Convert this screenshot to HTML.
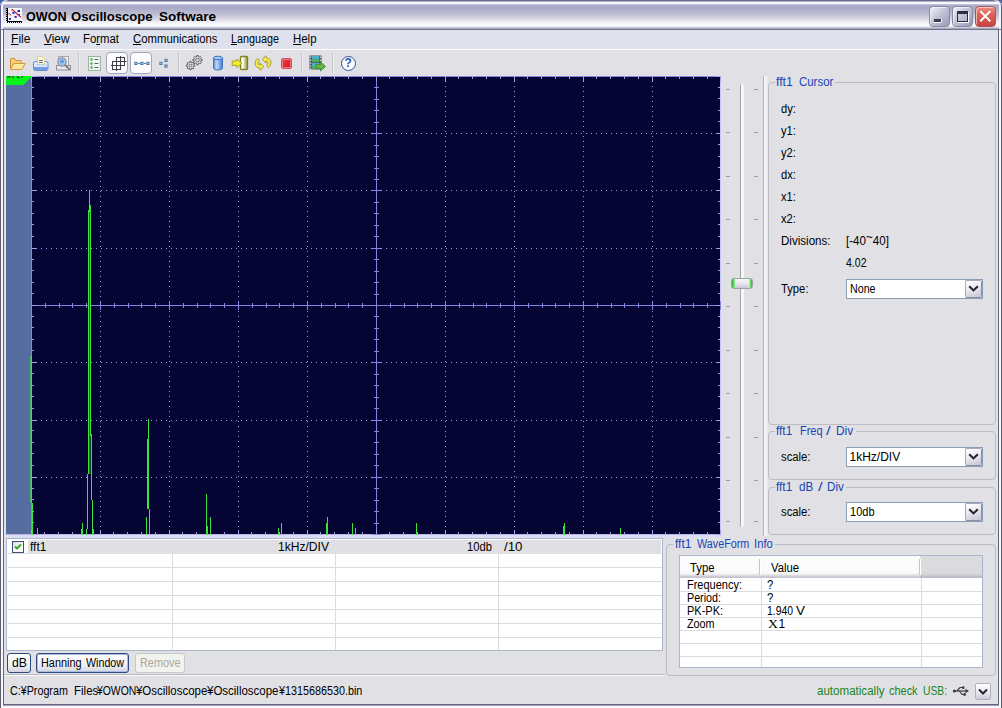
<!DOCTYPE html>
<html><head><meta charset="utf-8">
<style>
*{margin:0;padding:0;box-sizing:border-box}
html,body{width:1002px;height:708px;overflow:hidden;background:#3b62ae}
body{font-family:"Liberation Sans",sans-serif;font-size:12px;color:#000;position:relative}
.a{position:absolute}
.t{position:absolute;white-space:nowrap;line-height:14px;height:14px;font-size:12px;transform-origin:0 0}
u{text-decoration:underline;text-underline-offset:0.5px;text-decoration-thickness:1px}
#win{left:0;top:0;width:1002px;height:708px;background:#e1e0e5;border-radius:6px 6px 0 0;overflow:hidden}
#title{left:0;top:0;width:1002px;height:30px;background:linear-gradient(to bottom,#5a5a7c 0,#77779a 1px,#f0f0f8 2px,#fbfbff 3.5px,#c0c0d8 4.5px,#a8a8c8 6px,#adadc9 9px,#bebed2 14px,#d8d8e4 19px,#f4f4f9 23px,#ffffff 25.5px,#e0e0ea 27px,#a8a8be 28.5px,#74748f 29px,#74748f 30px)}
.gb{position:absolute;border:1px solid #bcbcc2;border-radius:4px}
.gbt{position:absolute;white-space:nowrap;line-height:14px;height:14px;font-size:12px;color:#1746b4;background:#e1e0e5;}
.combo{position:absolute;background:#fff;border:1px solid #8d9cb6;height:20px}
.cbtn{position:absolute;right:0;top:0;width:17px;height:18px;border:1px solid #a4aabc;border-right-color:#8a90a4;border-bottom-color:#8a90a4;border-radius:2px;background:linear-gradient(160deg,#ffffff 10%,#e6e6ee 50%,#c6c8d6 95%)}
.btn{position:absolute;height:20px;border:1px solid #6a7890;border-radius:3px;background:linear-gradient(to bottom,#ffffff,#f0f0f4 60%,#d4d4e0);}
</style></head><body>
<div id="win" class="a">
<div id="title" class="a"></div>
<div class="a" style="left:0;top:0;width:1002px;height:29px;border-radius:6px 6px 0 0;box-shadow:inset 1px 0 0 #5a6496,inset -1px 0 0 #5e5e78,inset 3px 0 0 #f4f4fa,inset -3px 0 0 #f4f4fa"></div>
<div class="a" style="left:0;top:30px;width:4px;height:678px;background:linear-gradient(to right,#5e5e72 0,#5e5e72 1px,#f8f8fb 1px,#f8f8fb 3px,#64647f 3px,#64647f 4px)"></div>
<div class="a" style="left:998px;top:30px;width:4px;height:678px;background:linear-gradient(to right,#64647f 0,#64647f 1px,#f8f8fb 1px,#f8f8fb 3px,#5e5e72 3px,#5e5e72 4px)"></div>
<div class="a" style="left:1px;top:704px;width:1000px;height:4px;background:linear-gradient(to bottom,#64647f 0,#64647f 1px,#a2a2b6 1px,#a2a2b6 2px,#f8f8fb 2px,#f8f8fb 4px)"></div>
<div class="a" style="left:1px;top:704px;width:2px;height:2px;background:#f8f8fb"></div><div class="a" style="left:999px;top:704px;width:2px;height:2px;background:#f8f8fb"></div>
<div class="a" style="left:4px;top:30px;width:994px;height:19px;background:#dfe2ec"></div>
<div class="a" style="left:4px;top:49px;width:994px;height:1px;background:#fbfbfd"></div>
<div class="a" style="left:4px;top:50px;width:994px;height:26px;background:#e1e0e5"></div>
<!-- TITLE -->
<div class="t" style="left:25.5px;top:10px;font-size:12.5px;transform:scaleX(1.006);font-weight:bold;">OWON</div>
<div class="t" style="left:70.5px;top:10px;font-size:12.5px;transform:scaleX(1.048);font-weight:bold;">Oscilloscope</div>
<div class="t" style="left:158.5px;top:10px;font-size:12.5px;transform:scaleX(1.080);font-weight:bold;">Software</div>
<svg class="a" style="left:6px;top:8px" width="16" height="15" viewBox="0 0 16 15"><rect x="2" y="0" width="14" height="13" fill="#f6f6fa"/><rect x="1" y="0" width="1" height="15" fill="#000"/><rect x="1" y="13" width="15" height="1" fill="#000"/><rect x="0" y="0" width="1" height="1" fill="#000"/><rect x="0" y="2" width="1" height="1" fill="#000"/><rect x="0" y="4" width="1" height="1" fill="#000"/><rect x="0" y="6" width="1" height="1" fill="#000"/><rect x="0" y="8" width="1" height="1" fill="#000"/><rect x="0" y="10" width="1" height="1" fill="#000"/><rect x="0" y="12" width="1" height="1" fill="#000"/><rect x="3" y="14" width="1" height="1" fill="#000"/><rect x="5" y="14" width="1" height="1" fill="#000"/><rect x="7" y="14" width="1" height="1" fill="#000"/><rect x="9" y="14" width="1" height="1" fill="#000"/><rect x="11" y="14" width="1" height="1" fill="#000"/><rect x="13" y="14" width="1" height="1" fill="#000"/><rect x="15" y="14" width="1" height="1" fill="#000"/><rect x="5.5" y="1" width="1.6" height="1.4" fill="#c8283a"/><rect x="6.65" y="2" width="1.6" height="1.4" fill="#c8283a"/><rect x="7.8" y="3" width="1.6" height="1.4" fill="#c8283a"/><rect x="8.95" y="4" width="1.6" height="1.4" fill="#c8283a"/><rect x="10.1" y="5" width="1.6" height="1.4" fill="#c8283a"/><rect x="11.25" y="6" width="1.6" height="1.4" fill="#c8283a"/><rect x="12.4" y="7" width="1.6" height="1.4" fill="#c8283a"/><rect x="13.55" y="8" width="1.6" height="1.4" fill="#c8283a"/><rect x="2.5" y="5" width="1.5" height="1.3" fill="#d05060"/><rect x="3.8" y="6.2" width="1.5" height="1.3" fill="#d05060"/><rect x="11.5" y="2" width="2.5" height="2" fill="#1a22c8"/><rect x="6.5" y="4" width="2" height="1.8" fill="#1a22c8"/><rect x="8.5" y="8" width="2.2" height="1.8" fill="#1a22c8"/><rect x="3" y="10" width="2" height="1.8" fill="#1a22c8"/><rect x="12.5" y="6" width="1.5" height="1.2" fill="#1a22c8"/></svg>
<div class="a" style="left:929px;top:6px;width:21px;height:21px;border-radius:4px;border:1px solid #8888a4;background:linear-gradient(135deg,#f4f4fa 0,#c4c4d8 45%,#9a9ab8 100%);box-shadow:inset 1px 1px 0 rgba(255,255,255,.55)"><div class="a" style="left:4px;top:12px;width:7px;height:3px;background:#3c3c58;box-shadow:0 1px 0 #fff, 1px 0 0 #fff"></div></div>
<div class="a" style="left:952px;top:6px;width:21px;height:21px;border-radius:4px;border:1px solid #8888a4;background:linear-gradient(135deg,#f4f4fa 0,#c4c4d8 45%,#9a9ab8 100%);box-shadow:inset 1px 1px 0 rgba(255,255,255,.55)"><div class="a" style="left:4px;top:4px;width:11px;height:11px;border:1px solid #2c2c48;border-top-width:3px;box-shadow:1px 1px 0 #fff"></div></div>
<div class="a" style="left:975px;top:6px;width:21px;height:21px;border-radius:4px;border:1px solid #b05058;background:linear-gradient(to bottom,#ea8e84 0,#dc6258 40%,#c64440 100%);box-shadow:inset 1px 1px 0 rgba(255,255,255,.55)"><svg class="a" style="left:0;top:0" width="19" height="19"><path d="M5 4.8L13.6 13.6M13.6 4.8L5 13.6" stroke="#fff" stroke-width="2" stroke-linecap="square"/></svg></div>
<!-- MENU -->
<div class="t" style="left:10.5px;top:32px;transform:scaleX(1.008);"><u>F</u>ile</div>
<div class="t" style="left:43.5px;top:32px;transform:scaleX(0.989);"><u>V</u>iew</div>
<div class="t" style="left:83px;top:32px;transform:scaleX(0.947);">Fo<u>r</u>mat</div>
<div class="t" style="left:132.5px;top:32px;transform:scaleX(0.946);"><u>C</u>ommunications</div>
<div class="t" style="left:231px;top:32px;transform:scaleX(0.899);"><u>L</u>anguage</div>
<div class="t" style="left:293px;top:32px;transform:scaleX(0.952);"><u>H</u>elp</div>
<!-- TOOLBAR -->
<div class="a" style="left:78px;top:53px;width:1px;height:20px;background:#c6c6cf"></div>
<div class="a" style="left:79px;top:53px;width:1px;height:20px;background:#ececf2"></div>
<div class="a" style="left:178px;top:53px;width:1px;height:20px;background:#c6c6cf"></div>
<div class="a" style="left:179px;top:53px;width:1px;height:20px;background:#ececf2"></div>
<div class="a" style="left:301px;top:53px;width:1px;height:20px;background:#c6c6cf"></div>
<div class="a" style="left:302px;top:53px;width:1px;height:20px;background:#ececf2"></div>
<div class="a" style="left:332px;top:53px;width:1px;height:20px;background:#c6c6cf"></div>
<div class="a" style="left:333px;top:53px;width:1px;height:20px;background:#ececf2"></div>
<div class="a" style="left:106px;top:52px;width:22px;height:22px;border:1px solid #9fa8ba;border-radius:4px;background:#fcfcfe"></div>
<div class="a" style="left:130px;top:52px;width:22px;height:22px;border:1px solid #9fa8ba;border-radius:4px;background:#fcfcfe"></div>
<svg class="a" style="left:9px;top:56px" width="18" height="16" viewBox="0 0 18 16"><path d="M1.5 12.5V3.5Q1.5 2.5 2.5 2.5H5.5L7 4.5H11.5Q12.5 4.5 12.5 5.5V7" fill="#f6cf7c" stroke="#cf8e32" stroke-width="1"/><path d="M1.6 13.5L4.8 7.5H16.3L12.8 13.5Z" fill="#fde7a4" stroke="#d39a3a" stroke-width="1" stroke-linejoin="round"/></svg>
<svg class="a" style="left:32px;top:55px" width="18" height="17" viewBox="0 0 18 17"><rect x="1.5" y="6.5" width="14.5" height="9" rx="2" fill="#dfeafa" stroke="#5a8ad2"/><path d="M1.8 12H15.7V14Q15.7 15.2 14.5 15.2H3Q1.8 15.2 1.8 14Z" fill="#6f9ce0"/><path d="M5.5 9.5V1.5H10L12.5 3.5V9.5Z" fill="#fcf6d4" stroke="#d9d2a0" stroke-width="1"/><path d="M7 5.5H11M7 7.5H11" stroke="#6c7890" stroke-width="1"/><path d="M4 9.8H14" stroke="#b8cdf0" stroke-width="1"/></svg>
<svg class="a" style="left:55px;top:55px" width="18" height="17" viewBox="0 0 18 17"><rect x="3.5" y="1.5" width="10" height="13" fill="#f0f0f2" stroke="#a8a8ac"/><rect x="1.5" y="10.5" width="14" height="4.5" fill="#e8e8ea" stroke="#909094"/><circle cx="7" cy="7" r="4.2" fill="#9ec4ee" stroke="#8a98a8" stroke-width="1.3"/><circle cx="7" cy="6.5" r="1.8" fill="#5e94d8"/><path d="M10 10L14 14" stroke="#808088" stroke-width="2" stroke-linecap="round"/></svg>
<svg class="a" style="left:88px;top:56px" width="13" height="15" viewBox="0 0 13 15"><rect x="0.5" y="0.5" width="12" height="14" fill="#f2f6f2" stroke="#9db4a4"/><circle cx="3.5" cy="3.5" r="1.2" fill="#4aa84a" stroke="#9ad09a" stroke-width="0.5"/><path d="M6.5 3.5H10.5" stroke="#50545c" stroke-width="0.9"/><circle cx="3.5" cy="7.5" r="1.2" fill="#4aa84a" stroke="#9ad09a" stroke-width="0.5"/><path d="M6.5 7.5H10.5" stroke="#50545c" stroke-width="0.9"/><circle cx="3.5" cy="11.5" r="1.2" fill="#4aa84a" stroke="#9ad09a" stroke-width="0.5"/><path d="M6.5 11.5H10.5" stroke="#50545c" stroke-width="0.9"/></svg>
<svg class="a" style="left:110px;top:55px" width="18" height="17" viewBox="0 0 18 17"><g fill="none" stroke="#404044" stroke-width="1"><path d="M2.5 6V15M6.5 2V16M10.5 1V15M14.5 2V11"/><path d="M6 2.5H15M2 6.5H16.5M1 10.5H15M2 14.5H11"/></g></svg>
<svg class="a" style="left:134px;top:61px" width="16" height="5" viewBox="0 0 16 5"><rect x="0.3" y="0.8" width="3.2" height="3.2" fill="#4a7aaa"/><rect x="1.3" y="1.8" width="1.2" height="1.2" fill="#b8d4ee"/><rect x="6.3" y="0.8" width="3.2" height="3.2" fill="#4a7aaa"/><rect x="7.3" y="1.8" width="1.2" height="1.2" fill="#b8d4ee"/><rect x="12.3" y="0.8" width="3.2" height="3.2" fill="#4a7aaa"/><rect x="13.3" y="1.8" width="1.2" height="1.2" fill="#b8d4ee"/><path d="M4 2.4H6M10 2.4H12" stroke="#4a7aaa" stroke-width="1"/></svg>
<svg class="a" style="left:159px;top:58px" width="9" height="10" viewBox="0 0 9 10"><rect x="0.3" y="3.8" width="3.2" height="3.2" fill="#4a7aaa"/><rect x="1.3" y="4.8" width="1.2" height="1.2" fill="#b8d4ee"/><rect x="5.4" y="0.8" width="3.2" height="3.2" fill="#4a7aaa"/><rect x="6.4" y="1.8" width="1.2" height="1.2" fill="#b8d4ee"/><rect x="5.4" y="6.5" width="3.2" height="3.2" fill="#4a7aaa"/><rect x="6.4" y="7.5" width="1.2" height="1.2" fill="#b8d4ee"/></svg>
<svg class="a" style="left:185px;top:55px" width="20" height="17" viewBox="0 0 20 17"><path d="M9.65 9.97 L9.65 11.23 L8.35 11.31 L8.02 12.12 L8.88 13.09 L7.99 13.98 L7.02 13.12 L6.21 13.45 L6.13 14.75 L4.87 14.75 L4.79 13.45 L3.98 13.12 L3.01 13.98 L2.12 13.09 L2.98 12.12 L2.65 11.31 L1.35 11.23 L1.35 9.97 L2.65 9.89 L2.98 9.08 L2.12 8.11 L3.01 7.22 L3.98 8.08 L4.79 7.75 L4.87 6.45 L6.13 6.45 L6.21 7.75 L7.02 8.08 L7.99 7.22 L8.88 8.11 L8.02 9.08 L8.35 9.89 Z" fill="#fafafc" stroke="#46464a" stroke-width="0.85" stroke-linejoin="round"/><circle cx="5.5" cy="10.6" r="1.5" fill="#e8e8ec" stroke="#46464a" stroke-width="0.8"/><path d="M17.15 4.40 L17.15 5.80 L15.69 5.89 L15.32 6.80 L16.28 7.89 L15.29 8.88 L14.20 7.92 L13.29 8.29 L13.20 9.75 L11.80 9.75 L11.71 8.29 L10.80 7.92 L9.71 8.88 L8.72 7.89 L9.68 6.80 L9.31 5.89 L7.85 5.80 L7.85 4.40 L9.31 4.31 L9.68 3.40 L8.72 2.31 L9.71 1.32 L10.80 2.28 L11.71 1.91 L11.80 0.45 L13.20 0.45 L13.29 1.91 L14.20 2.28 L15.29 1.32 L16.28 2.31 L15.32 3.40 L15.69 4.31 Z" fill="#fafafc" stroke="#46464a" stroke-width="0.85" stroke-linejoin="round"/><circle cx="12.5" cy="5.1" r="1.8" fill="#e8e8ec" stroke="#46464a" stroke-width="0.8"/></svg>
<svg class="a" style="left:212px;top:55px" width="12" height="16" viewBox="0 0 12 16"><defs><linearGradient id="cy" x1="0" x2="1" y1="0" y2="0"><stop offset="0" stop-color="#5b8ad6"/><stop offset="0.35" stop-color="#bcd6f6"/><stop offset="1" stop-color="#4a7bcc"/></linearGradient></defs><path d="M1.5 3V13Q1.5 15 6 15Q10.5 15 10.5 13V3Z" fill="url(#cy)" stroke="#3f72c4"/><ellipse cx="6" cy="3" rx="4.5" ry="1.8" fill="#a8c8f4" stroke="#3f72c4"/></svg>
<svg class="a" style="left:231px;top:55px" width="18" height="16" viewBox="0 0 18 16"><defs><linearGradient id="bx" x1="0" x2="1" y1="0" y2="0"><stop offset="0" stop-color="#ffffff"/><stop offset="0.35" stop-color="#fbfbf0"/><stop offset="1" stop-color="#8c9428"/></linearGradient></defs><path d="M9.5 2.5Q9.5 1.5 10.5 1.5H15.5Q16.5 1.5 16.5 2.5V13.5Q16.5 14.5 15.5 14.5H10.5Q9.5 14.5 9.5 13.5Z" fill="url(#bx)" stroke="#7e8420" stroke-width="1.4"/><path d="M1.2 6H5.8V4L10.8 8.2L5.8 12.6V10.4H1.2Z" fill="#f4ee2a" stroke="#9c9c24" stroke-width="0.9" stroke-linejoin="round"/></svg>
<svg class="a" style="left:254px;top:55px" width="18" height="16" viewBox="0 0 18 16"><g fill="#f7ea48" stroke="#a4962e" stroke-width="0.9" stroke-linejoin="round"><path d="M8.2 4.2L12 0.8V2.8Q17 3.4 17 8Q16.8 11 14.2 12.6L12.6 10.4Q14.2 9.2 14 7.6Q13.6 6.2 12 6V8.2Z"/><path d="M9.8 11.8L6 15.2V13.2Q1 12.6 1 8Q1.2 5 3.8 3.4L5.4 5.6Q3.8 6.8 4 8.4Q4.4 9.8 6 10V7.8Z"/></g></svg>
<div class="a" style="left:281px;top:58px;width:11px;height:11px;border:1px solid #d0505a;border-radius:2px;background:linear-gradient(135deg,#ee4a54,#e02832 50%,#d81c28);box-shadow:inset 0 0 0 1px #f07880;"></div>
<svg class="a" style="left:309px;top:55px" width="17" height="17" viewBox="0 0 17 17"><rect x="0.5" y="0.5" width="12" height="14" fill="#58585c"/><rect x="3" y="1" width="7" height="6" fill="#4ab0d0"/><rect x="3" y="4" width="7" height="3" fill="#48b060"/><rect x="3" y="8" width="7" height="6" fill="#4ab0d0"/><rect x="3" y="11" width="7" height="3" fill="#48b060"/><rect x="1" y="1.5" width="1.2" height="1.4" fill="#d8d8dc"/><rect x="10.8" y="1.5" width="1.2" height="1.4" fill="#d8d8dc"/><rect x="1" y="4.5" width="1.2" height="1.4" fill="#d8d8dc"/><rect x="10.8" y="4.5" width="1.2" height="1.4" fill="#d8d8dc"/><rect x="1" y="7.5" width="1.2" height="1.4" fill="#d8d8dc"/><rect x="10.8" y="7.5" width="1.2" height="1.4" fill="#d8d8dc"/><rect x="1" y="10.5" width="1.2" height="1.4" fill="#d8d8dc"/><rect x="10.8" y="10.5" width="1.2" height="1.4" fill="#d8d8dc"/><rect x="1" y="13" width="1.2" height="1.4" fill="#d8d8dc"/><rect x="10.8" y="13" width="1.2" height="1.4" fill="#d8d8dc"/><path d="M7 9.5H11.5V7L16.5 11.5L11.5 16V13.5H7Z" fill="#62b84a" stroke="#3c8a30" stroke-width="0.9" stroke-linejoin="round"/></svg>
<div class="a" style="left:341px;top:55.5px;width:15px;height:15px;border:1.3px solid #2a529e;border-radius:50%;background:#fdfdff"></div>
<div class="t" style="left:344.6px;top:56px;font-size:12px;font-weight:bold;color:#2a56b0">?</div>
<!-- SCOPE -->
<svg class="a" style="left:6px;top:76px" width="716" height="463" shape-rendering="crispEdges"><rect x="0" y="459" width="715" height="3" fill="#dcdcf3"/><rect x="0" y="0" width="25" height="459" fill="#566e9f"/><rect x="25" y="0" width="690" height="459" fill="#050432"/><path d="M0 0H25V1.5L18.5 8.5H0Z" fill="#06f41c"/><path d="M2.5 0L1.5 2M4.5 0L3.5 2M7.5 0L6.5 2M11.5 0V2M11.5 1.5H13.5M16.5 0L15.5 2" stroke="#0a3a0a" stroke-width="1" fill="none" shape-rendering="auto"/><path d="M94.5 0V458M163.5 0V458M232.5 0V458M301.5 0V458M439.5 0V458M508.5 0V458M577.5 0V458M646.5 0V458M25 57.5H714M25 114.5H714M25 172.5H714M25 286.5H714M25 344.5H714M25 401.5H714" stroke="#9a9ae6" stroke-width="1" stroke-dasharray="1 4" fill="none"/><rect x="25" y="0" width="690" height="1" fill="#8484e2"/><rect x="25" y="0" width="1" height="459" fill="#8484e2"/><rect x="714" y="0" width="1" height="459" fill="#c6c6fa"/><rect x="0" y="458" width="715" height="1" fill="#b6b6f2"/><rect x="370" y="0" width="1" height="459" fill="#8484e2"/><rect x="25" y="229" width="690" height="1" fill="#8484e2"/><rect x="25" y="0" width="1" height="5" fill="#a2a2ea"/><rect x="25" y="454" width="1" height="5" fill="#a2a2ea"/><rect x="25" y="225" width="1" height="9" fill="#8484e2"/><rect x="38" y="0" width="1" height="3" fill="#a2a2ea"/><rect x="38" y="456" width="1" height="3" fill="#a2a2ea"/><rect x="39" y="227" width="1" height="5" fill="#8484e2"/><rect x="52" y="0" width="1" height="3" fill="#a2a2ea"/><rect x="52" y="456" width="1" height="3" fill="#a2a2ea"/><rect x="53" y="227" width="1" height="5" fill="#8484e2"/><rect x="66" y="0" width="1" height="3" fill="#a2a2ea"/><rect x="66" y="456" width="1" height="3" fill="#a2a2ea"/><rect x="66" y="227" width="1" height="5" fill="#8484e2"/><rect x="80" y="0" width="1" height="3" fill="#a2a2ea"/><rect x="80" y="456" width="1" height="3" fill="#a2a2ea"/><rect x="80" y="227" width="1" height="5" fill="#8484e2"/><rect x="94" y="0" width="1" height="5" fill="#a2a2ea"/><rect x="94" y="454" width="1" height="5" fill="#a2a2ea"/><rect x="94" y="225" width="1" height="9" fill="#8484e2"/><rect x="107" y="0" width="1" height="3" fill="#a2a2ea"/><rect x="107" y="456" width="1" height="3" fill="#a2a2ea"/><rect x="108" y="227" width="1" height="5" fill="#8484e2"/><rect x="121" y="0" width="1" height="3" fill="#a2a2ea"/><rect x="121" y="456" width="1" height="3" fill="#a2a2ea"/><rect x="122" y="227" width="1" height="5" fill="#8484e2"/><rect x="135" y="0" width="1" height="3" fill="#a2a2ea"/><rect x="135" y="456" width="1" height="3" fill="#a2a2ea"/><rect x="135" y="227" width="1" height="5" fill="#8484e2"/><rect x="149" y="0" width="1" height="3" fill="#a2a2ea"/><rect x="149" y="456" width="1" height="3" fill="#a2a2ea"/><rect x="149" y="227" width="1" height="5" fill="#8484e2"/><rect x="163" y="0" width="1" height="5" fill="#a2a2ea"/><rect x="163" y="454" width="1" height="5" fill="#a2a2ea"/><rect x="163" y="225" width="1" height="9" fill="#8484e2"/><rect x="176" y="0" width="1" height="3" fill="#a2a2ea"/><rect x="176" y="456" width="1" height="3" fill="#a2a2ea"/><rect x="177" y="227" width="1" height="5" fill="#8484e2"/><rect x="190" y="0" width="1" height="3" fill="#a2a2ea"/><rect x="190" y="456" width="1" height="3" fill="#a2a2ea"/><rect x="191" y="227" width="1" height="5" fill="#8484e2"/><rect x="204" y="0" width="1" height="3" fill="#a2a2ea"/><rect x="204" y="456" width="1" height="3" fill="#a2a2ea"/><rect x="204" y="227" width="1" height="5" fill="#8484e2"/><rect x="218" y="0" width="1" height="3" fill="#a2a2ea"/><rect x="218" y="456" width="1" height="3" fill="#a2a2ea"/><rect x="218" y="227" width="1" height="5" fill="#8484e2"/><rect x="232" y="0" width="1" height="5" fill="#a2a2ea"/><rect x="232" y="454" width="1" height="5" fill="#a2a2ea"/><rect x="232" y="225" width="1" height="9" fill="#8484e2"/><rect x="245" y="0" width="1" height="3" fill="#a2a2ea"/><rect x="245" y="456" width="1" height="3" fill="#a2a2ea"/><rect x="246" y="227" width="1" height="5" fill="#8484e2"/><rect x="259" y="0" width="1" height="3" fill="#a2a2ea"/><rect x="259" y="456" width="1" height="3" fill="#a2a2ea"/><rect x="260" y="227" width="1" height="5" fill="#8484e2"/><rect x="273" y="0" width="1" height="3" fill="#a2a2ea"/><rect x="273" y="456" width="1" height="3" fill="#a2a2ea"/><rect x="273" y="227" width="1" height="5" fill="#8484e2"/><rect x="287" y="0" width="1" height="3" fill="#a2a2ea"/><rect x="287" y="456" width="1" height="3" fill="#a2a2ea"/><rect x="287" y="227" width="1" height="5" fill="#8484e2"/><rect x="301" y="0" width="1" height="5" fill="#a2a2ea"/><rect x="301" y="454" width="1" height="5" fill="#a2a2ea"/><rect x="301" y="225" width="1" height="9" fill="#8484e2"/><rect x="314" y="0" width="1" height="3" fill="#a2a2ea"/><rect x="314" y="456" width="1" height="3" fill="#a2a2ea"/><rect x="315" y="227" width="1" height="5" fill="#8484e2"/><rect x="328" y="0" width="1" height="3" fill="#a2a2ea"/><rect x="328" y="456" width="1" height="3" fill="#a2a2ea"/><rect x="329" y="227" width="1" height="5" fill="#8484e2"/><rect x="342" y="0" width="1" height="3" fill="#a2a2ea"/><rect x="342" y="456" width="1" height="3" fill="#a2a2ea"/><rect x="342" y="227" width="1" height="5" fill="#8484e2"/><rect x="356" y="0" width="1" height="3" fill="#a2a2ea"/><rect x="356" y="456" width="1" height="3" fill="#a2a2ea"/><rect x="356" y="227" width="1" height="5" fill="#8484e2"/><rect x="370" y="0" width="1" height="5" fill="#a2a2ea"/><rect x="370" y="454" width="1" height="5" fill="#a2a2ea"/><rect x="370" y="225" width="1" height="9" fill="#8484e2"/><rect x="383" y="0" width="1" height="3" fill="#a2a2ea"/><rect x="383" y="456" width="1" height="3" fill="#a2a2ea"/><rect x="384" y="227" width="1" height="5" fill="#8484e2"/><rect x="397" y="0" width="1" height="3" fill="#a2a2ea"/><rect x="397" y="456" width="1" height="3" fill="#a2a2ea"/><rect x="398" y="227" width="1" height="5" fill="#8484e2"/><rect x="411" y="0" width="1" height="3" fill="#a2a2ea"/><rect x="411" y="456" width="1" height="3" fill="#a2a2ea"/><rect x="411" y="227" width="1" height="5" fill="#8484e2"/><rect x="425" y="0" width="1" height="3" fill="#a2a2ea"/><rect x="425" y="456" width="1" height="3" fill="#a2a2ea"/><rect x="425" y="227" width="1" height="5" fill="#8484e2"/><rect x="439" y="0" width="1" height="5" fill="#a2a2ea"/><rect x="439" y="454" width="1" height="5" fill="#a2a2ea"/><rect x="439" y="225" width="1" height="9" fill="#8484e2"/><rect x="452" y="0" width="1" height="3" fill="#a2a2ea"/><rect x="452" y="456" width="1" height="3" fill="#a2a2ea"/><rect x="453" y="227" width="1" height="5" fill="#8484e2"/><rect x="466" y="0" width="1" height="3" fill="#a2a2ea"/><rect x="466" y="456" width="1" height="3" fill="#a2a2ea"/><rect x="467" y="227" width="1" height="5" fill="#8484e2"/><rect x="480" y="0" width="1" height="3" fill="#a2a2ea"/><rect x="480" y="456" width="1" height="3" fill="#a2a2ea"/><rect x="480" y="227" width="1" height="5" fill="#8484e2"/><rect x="494" y="0" width="1" height="3" fill="#a2a2ea"/><rect x="494" y="456" width="1" height="3" fill="#a2a2ea"/><rect x="494" y="227" width="1" height="5" fill="#8484e2"/><rect x="508" y="0" width="1" height="5" fill="#a2a2ea"/><rect x="508" y="454" width="1" height="5" fill="#a2a2ea"/><rect x="508" y="225" width="1" height="9" fill="#8484e2"/><rect x="521" y="0" width="1" height="3" fill="#a2a2ea"/><rect x="521" y="456" width="1" height="3" fill="#a2a2ea"/><rect x="522" y="227" width="1" height="5" fill="#8484e2"/><rect x="535" y="0" width="1" height="3" fill="#a2a2ea"/><rect x="535" y="456" width="1" height="3" fill="#a2a2ea"/><rect x="536" y="227" width="1" height="5" fill="#8484e2"/><rect x="549" y="0" width="1" height="3" fill="#a2a2ea"/><rect x="549" y="456" width="1" height="3" fill="#a2a2ea"/><rect x="549" y="227" width="1" height="5" fill="#8484e2"/><rect x="563" y="0" width="1" height="3" fill="#a2a2ea"/><rect x="563" y="456" width="1" height="3" fill="#a2a2ea"/><rect x="563" y="227" width="1" height="5" fill="#8484e2"/><rect x="577" y="0" width="1" height="5" fill="#a2a2ea"/><rect x="577" y="454" width="1" height="5" fill="#a2a2ea"/><rect x="577" y="225" width="1" height="9" fill="#8484e2"/><rect x="590" y="0" width="1" height="3" fill="#a2a2ea"/><rect x="590" y="456" width="1" height="3" fill="#a2a2ea"/><rect x="591" y="227" width="1" height="5" fill="#8484e2"/><rect x="604" y="0" width="1" height="3" fill="#a2a2ea"/><rect x="604" y="456" width="1" height="3" fill="#a2a2ea"/><rect x="605" y="227" width="1" height="5" fill="#8484e2"/><rect x="618" y="0" width="1" height="3" fill="#a2a2ea"/><rect x="618" y="456" width="1" height="3" fill="#a2a2ea"/><rect x="618" y="227" width="1" height="5" fill="#8484e2"/><rect x="632" y="0" width="1" height="3" fill="#a2a2ea"/><rect x="632" y="456" width="1" height="3" fill="#a2a2ea"/><rect x="632" y="227" width="1" height="5" fill="#8484e2"/><rect x="646" y="0" width="1" height="5" fill="#a2a2ea"/><rect x="646" y="454" width="1" height="5" fill="#a2a2ea"/><rect x="646" y="225" width="1" height="9" fill="#8484e2"/><rect x="659" y="0" width="1" height="3" fill="#a2a2ea"/><rect x="659" y="456" width="1" height="3" fill="#a2a2ea"/><rect x="660" y="227" width="1" height="5" fill="#8484e2"/><rect x="673" y="0" width="1" height="3" fill="#a2a2ea"/><rect x="673" y="456" width="1" height="3" fill="#a2a2ea"/><rect x="674" y="227" width="1" height="5" fill="#8484e2"/><rect x="687" y="0" width="1" height="3" fill="#a2a2ea"/><rect x="687" y="456" width="1" height="3" fill="#a2a2ea"/><rect x="687" y="227" width="1" height="5" fill="#8484e2"/><rect x="701" y="0" width="1" height="3" fill="#a2a2ea"/><rect x="701" y="456" width="1" height="3" fill="#a2a2ea"/><rect x="701" y="227" width="1" height="5" fill="#8484e2"/><rect x="714" y="0" width="1" height="5" fill="#a2a2ea"/><rect x="714" y="454" width="1" height="5" fill="#a2a2ea"/><rect x="714" y="225" width="1" height="9" fill="#8484e2"/><rect x="26" y="0" width="5" height="1" fill="#a2a2ea"/><rect x="710" y="0" width="4" height="1" fill="#a2a2ea"/><rect x="366" y="0" width="9" height="1" fill="#8484e2"/><rect x="26" y="11" width="2" height="1" fill="#a2a2ea"/><rect x="712" y="11" width="2" height="1" fill="#a2a2ea"/><rect x="368" y="11" width="5" height="1" fill="#8484e2"/><rect x="26" y="22" width="2" height="1" fill="#a2a2ea"/><rect x="712" y="22" width="2" height="1" fill="#a2a2ea"/><rect x="368" y="23" width="5" height="1" fill="#8484e2"/><rect x="26" y="34" width="2" height="1" fill="#a2a2ea"/><rect x="712" y="34" width="2" height="1" fill="#a2a2ea"/><rect x="368" y="34" width="5" height="1" fill="#8484e2"/><rect x="26" y="45" width="2" height="1" fill="#a2a2ea"/><rect x="712" y="45" width="2" height="1" fill="#a2a2ea"/><rect x="368" y="46" width="5" height="1" fill="#8484e2"/><rect x="26" y="57" width="5" height="1" fill="#a2a2ea"/><rect x="710" y="57" width="4" height="1" fill="#a2a2ea"/><rect x="366" y="57" width="9" height="1" fill="#8484e2"/><rect x="26" y="68" width="2" height="1" fill="#a2a2ea"/><rect x="712" y="68" width="2" height="1" fill="#a2a2ea"/><rect x="368" y="69" width="5" height="1" fill="#8484e2"/><rect x="26" y="80" width="2" height="1" fill="#a2a2ea"/><rect x="712" y="80" width="2" height="1" fill="#a2a2ea"/><rect x="368" y="80" width="5" height="1" fill="#8484e2"/><rect x="26" y="91" width="2" height="1" fill="#a2a2ea"/><rect x="712" y="91" width="2" height="1" fill="#a2a2ea"/><rect x="368" y="92" width="5" height="1" fill="#8484e2"/><rect x="26" y="103" width="2" height="1" fill="#a2a2ea"/><rect x="712" y="103" width="2" height="1" fill="#a2a2ea"/><rect x="368" y="103" width="5" height="1" fill="#8484e2"/><rect x="26" y="114" width="5" height="1" fill="#a2a2ea"/><rect x="710" y="114" width="4" height="1" fill="#a2a2ea"/><rect x="366" y="114" width="9" height="1" fill="#8484e2"/><rect x="26" y="125" width="2" height="1" fill="#a2a2ea"/><rect x="712" y="125" width="2" height="1" fill="#a2a2ea"/><rect x="368" y="126" width="5" height="1" fill="#8484e2"/><rect x="26" y="137" width="2" height="1" fill="#a2a2ea"/><rect x="712" y="137" width="2" height="1" fill="#a2a2ea"/><rect x="368" y="137" width="5" height="1" fill="#8484e2"/><rect x="26" y="148" width="2" height="1" fill="#a2a2ea"/><rect x="712" y="148" width="2" height="1" fill="#a2a2ea"/><rect x="368" y="149" width="5" height="1" fill="#8484e2"/><rect x="26" y="160" width="2" height="1" fill="#a2a2ea"/><rect x="712" y="160" width="2" height="1" fill="#a2a2ea"/><rect x="368" y="160" width="5" height="1" fill="#8484e2"/><rect x="26" y="172" width="5" height="1" fill="#a2a2ea"/><rect x="710" y="172" width="4" height="1" fill="#a2a2ea"/><rect x="366" y="172" width="9" height="1" fill="#8484e2"/><rect x="26" y="183" width="2" height="1" fill="#a2a2ea"/><rect x="712" y="183" width="2" height="1" fill="#a2a2ea"/><rect x="368" y="183" width="5" height="1" fill="#8484e2"/><rect x="26" y="194" width="2" height="1" fill="#a2a2ea"/><rect x="712" y="194" width="2" height="1" fill="#a2a2ea"/><rect x="368" y="195" width="5" height="1" fill="#8484e2"/><rect x="26" y="206" width="2" height="1" fill="#a2a2ea"/><rect x="712" y="206" width="2" height="1" fill="#a2a2ea"/><rect x="368" y="206" width="5" height="1" fill="#8484e2"/><rect x="26" y="217" width="2" height="1" fill="#a2a2ea"/><rect x="712" y="217" width="2" height="1" fill="#a2a2ea"/><rect x="368" y="218" width="5" height="1" fill="#8484e2"/><rect x="26" y="229" width="5" height="1" fill="#a2a2ea"/><rect x="710" y="229" width="4" height="1" fill="#a2a2ea"/><rect x="366" y="229" width="9" height="1" fill="#8484e2"/><rect x="26" y="240" width="2" height="1" fill="#a2a2ea"/><rect x="712" y="240" width="2" height="1" fill="#a2a2ea"/><rect x="368" y="240" width="5" height="1" fill="#8484e2"/><rect x="26" y="251" width="2" height="1" fill="#a2a2ea"/><rect x="712" y="251" width="2" height="1" fill="#a2a2ea"/><rect x="368" y="252" width="5" height="1" fill="#8484e2"/><rect x="26" y="263" width="2" height="1" fill="#a2a2ea"/><rect x="712" y="263" width="2" height="1" fill="#a2a2ea"/><rect x="368" y="263" width="5" height="1" fill="#8484e2"/><rect x="26" y="274" width="2" height="1" fill="#a2a2ea"/><rect x="712" y="274" width="2" height="1" fill="#a2a2ea"/><rect x="368" y="275" width="5" height="1" fill="#8484e2"/><rect x="26" y="286" width="5" height="1" fill="#a2a2ea"/><rect x="710" y="286" width="4" height="1" fill="#a2a2ea"/><rect x="366" y="286" width="9" height="1" fill="#8484e2"/><rect x="26" y="297" width="2" height="1" fill="#a2a2ea"/><rect x="712" y="297" width="2" height="1" fill="#a2a2ea"/><rect x="368" y="298" width="5" height="1" fill="#8484e2"/><rect x="26" y="309" width="2" height="1" fill="#a2a2ea"/><rect x="712" y="309" width="2" height="1" fill="#a2a2ea"/><rect x="368" y="309" width="5" height="1" fill="#8484e2"/><rect x="26" y="320" width="2" height="1" fill="#a2a2ea"/><rect x="712" y="320" width="2" height="1" fill="#a2a2ea"/><rect x="368" y="321" width="5" height="1" fill="#8484e2"/><rect x="26" y="332" width="2" height="1" fill="#a2a2ea"/><rect x="712" y="332" width="2" height="1" fill="#a2a2ea"/><rect x="368" y="332" width="5" height="1" fill="#8484e2"/><rect x="26" y="344" width="5" height="1" fill="#a2a2ea"/><rect x="710" y="344" width="4" height="1" fill="#a2a2ea"/><rect x="366" y="344" width="9" height="1" fill="#8484e2"/><rect x="26" y="354" width="2" height="1" fill="#a2a2ea"/><rect x="712" y="354" width="2" height="1" fill="#a2a2ea"/><rect x="368" y="355" width="5" height="1" fill="#8484e2"/><rect x="26" y="366" width="2" height="1" fill="#a2a2ea"/><rect x="712" y="366" width="2" height="1" fill="#a2a2ea"/><rect x="368" y="366" width="5" height="1" fill="#8484e2"/><rect x="26" y="377" width="2" height="1" fill="#a2a2ea"/><rect x="712" y="377" width="2" height="1" fill="#a2a2ea"/><rect x="368" y="378" width="5" height="1" fill="#8484e2"/><rect x="26" y="389" width="2" height="1" fill="#a2a2ea"/><rect x="712" y="389" width="2" height="1" fill="#a2a2ea"/><rect x="368" y="389" width="5" height="1" fill="#8484e2"/><rect x="26" y="401" width="5" height="1" fill="#a2a2ea"/><rect x="710" y="401" width="4" height="1" fill="#a2a2ea"/><rect x="366" y="401" width="9" height="1" fill="#8484e2"/><rect x="26" y="412" width="2" height="1" fill="#a2a2ea"/><rect x="712" y="412" width="2" height="1" fill="#a2a2ea"/><rect x="368" y="412" width="5" height="1" fill="#8484e2"/><rect x="26" y="423" width="2" height="1" fill="#a2a2ea"/><rect x="712" y="423" width="2" height="1" fill="#a2a2ea"/><rect x="368" y="424" width="5" height="1" fill="#8484e2"/><rect x="26" y="435" width="2" height="1" fill="#a2a2ea"/><rect x="712" y="435" width="2" height="1" fill="#a2a2ea"/><rect x="368" y="435" width="5" height="1" fill="#8484e2"/><rect x="26" y="446" width="2" height="1" fill="#a2a2ea"/><rect x="712" y="446" width="2" height="1" fill="#a2a2ea"/><rect x="368" y="447" width="5" height="1" fill="#8484e2"/><rect x="26" y="458" width="5" height="1" fill="#a2a2ea"/><rect x="710" y="458" width="4" height="1" fill="#a2a2ea"/><rect x="366" y="458" width="9" height="1" fill="#8484e2"/><rect x="25" y="280" width="1" height="147" fill="#3fe23c"/><rect x="24" y="280" width="1" height="147" fill="#48b860"/><rect x="26" y="427" width="1" height="32" fill="#3fe23c"/><rect x="31" y="452" width="1" height="7" fill="#3fe23c"/><rect x="76" y="447" width="1" height="12" fill="#3fe23c"/><rect x="75" y="453" width="1" height="6" fill="#3fe23c"/><rect x="83" y="114" width="1" height="22" fill="#3fe23c"/><rect x="82" y="134" width="1" height="264" fill="#3fe23c"/><rect x="84" y="129" width="1" height="231" fill="#3fe23c"/><rect x="83" y="136" width="1" height="262" fill="#17702c"/><rect x="84" y="360" width="1" height="38" fill="#0e4a2a"/><rect x="81" y="398" width="1" height="55" fill="#3fe23c"/><rect x="80" y="453" width="1" height="6" fill="#3fe23c"/><rect x="85" y="358" width="1" height="66" fill="#3fe23c"/><rect x="86" y="424" width="1" height="29" fill="#3fe23c"/><rect x="86" y="453" width="2" height="6" fill="#3fe23c"/><rect x="142" y="343" width="1" height="21" fill="#3fe23c"/><rect x="141" y="363" width="2" height="70" fill="#3fe23c"/><rect x="140" y="441" width="1" height="18" fill="#3fe23c"/><rect x="143" y="433" width="1" height="26" fill="#3fe23c"/><rect x="200" y="418" width="1" height="41" fill="#3fe23c"/><rect x="201" y="450" width="1" height="9" fill="#3fe23c"/><rect x="204" y="441" width="1" height="18" fill="#3fe23c"/><rect x="275" y="447" width="1" height="12" fill="#3fe23c"/><rect x="272" y="452" width="1" height="7" fill="#3fe23c"/><rect x="321" y="441" width="1" height="18" fill="#3fe23c"/><rect x="320" y="447" width="1" height="12" fill="#3fe23c"/><rect x="346" y="447" width="1" height="12" fill="#3fe23c"/><rect x="349" y="452" width="1" height="7" fill="#3fe23c"/><rect x="410" y="447" width="1" height="12" fill="#3fe23c"/><rect x="558" y="447" width="1" height="12" fill="#3fe23c"/><rect x="557" y="450" width="1" height="9" fill="#3fe23c"/><rect x="614" y="452" width="1" height="7" fill="#3fe23c"/></svg>
<!-- SLIDER -->
<div class="a" style="left:726px;top:89px;width:4px;height:1px;background:#9c9ca4"></div>
<div class="a" style="left:754px;top:89px;width:4px;height:1px;background:#9c9ca4"></div>
<div class="a" style="left:726px;top:132px;width:4px;height:1px;background:#9c9ca4"></div>
<div class="a" style="left:754px;top:132px;width:4px;height:1px;background:#9c9ca4"></div>
<div class="a" style="left:726px;top:176px;width:4px;height:1px;background:#9c9ca4"></div>
<div class="a" style="left:754px;top:176px;width:4px;height:1px;background:#9c9ca4"></div>
<div class="a" style="left:726px;top:219px;width:4px;height:1px;background:#9c9ca4"></div>
<div class="a" style="left:754px;top:219px;width:4px;height:1px;background:#9c9ca4"></div>
<div class="a" style="left:726px;top:263px;width:4px;height:1px;background:#9c9ca4"></div>
<div class="a" style="left:754px;top:263px;width:4px;height:1px;background:#9c9ca4"></div>
<div class="a" style="left:726px;top:306px;width:4px;height:1px;background:#9c9ca4"></div>
<div class="a" style="left:754px;top:306px;width:4px;height:1px;background:#9c9ca4"></div>
<div class="a" style="left:726px;top:350px;width:4px;height:1px;background:#9c9ca4"></div>
<div class="a" style="left:754px;top:350px;width:4px;height:1px;background:#9c9ca4"></div>
<div class="a" style="left:726px;top:393px;width:4px;height:1px;background:#9c9ca4"></div>
<div class="a" style="left:754px;top:393px;width:4px;height:1px;background:#9c9ca4"></div>
<div class="a" style="left:726px;top:437px;width:4px;height:1px;background:#9c9ca4"></div>
<div class="a" style="left:754px;top:437px;width:4px;height:1px;background:#9c9ca4"></div>
<div class="a" style="left:726px;top:480px;width:4px;height:1px;background:#9c9ca4"></div>
<div class="a" style="left:754px;top:480px;width:4px;height:1px;background:#9c9ca4"></div>
<div class="a" style="left:726px;top:521px;width:4px;height:1px;background:#9c9ca4"></div>
<div class="a" style="left:754px;top:521px;width:4px;height:1px;background:#9c9ca4"></div>
<div class="a" style="left:740px;top:84px;width:4px;height:443px;border-radius:2px;background:linear-gradient(to right,#a4a4aa 0,#a4a4aa 1px,#f6f6f4 1px,#fdfdfb 3px,#ecece8 4px)"></div>
<div class="a" style="left:731px;top:278px;width:22px;height:11px;border-radius:3px;border:1px solid #9aa4a0;background:linear-gradient(to right,#34b83a 0,#5cdc5c 2px,#e8ecec 3.5px,#ececf2 17px,#5cdc5c 18.5px,#34b83a 20px);overflow:hidden"><div class="a" style="left:3px;top:0;width:14px;height:9px;background:linear-gradient(to bottom,#f8f8fb,#e6e4ee 55%,#c8c8d6)"></div></div>
<div class="a" style="left:763px;top:76px;width:1px;height:460px;background:#b4b4bc"></div>
<div class="a" style="left:764px;top:76px;width:4px;height:460px;background:linear-gradient(to right,#f8f8fb 0,#f4f4f8 1.5px,#e8e8ed 4px)"></div>
<!-- RIGHT -->
<div class="gb" style="left:768px;top:82px;width:228px;height:343px"></div>
<div class="a" style="left:775px;top:81px;width:60px;height:3px;background:#e1e0e5"></div>
<div class="t" style="left:776.2px;top:75px;transform:scaleX(1.021);color:#1746b4;">fft1</div>
<div class="t" style="left:798.5px;top:75px;transform:scaleX(0.953);color:#1746b4;">Cursor</div>
<div class="t" style="left:780.5px;top:101.5px;transform:scaleX(0.930);">dy:</div>
<div class="t" style="left:780.5px;top:123.5px;transform:scaleX(0.930);">y1:</div>
<div class="t" style="left:780.5px;top:145.5px;transform:scaleX(0.930);">y2:</div>
<div class="t" style="left:780.5px;top:167.5px;transform:scaleX(0.930);">dx:</div>
<div class="t" style="left:780.5px;top:189.5px;transform:scaleX(0.930);">x1:</div>
<div class="t" style="left:780.5px;top:211.5px;transform:scaleX(0.930);">x2:</div>
<div class="t" style="left:780.5px;top:233.5px;transform:scaleX(0.964);">Divisions:</div>
<div class="t" style="left:846px;top:233.5px;transform:scaleX(0.969);">[-40<span style="position:relative;top:-4px">~</span>40]</div>
<div class="t" style="left:845.5px;top:255.5px;transform:scaleX(0.878);">4.02</div>
<div class="t" style="left:780.5px;top:281.5px;transform:scaleX(0.937);">Type:</div>
<div class="combo" style="left:846px;top:279px;width:137px"><div class="cbtn"></div><svg class="a" style="right:3px;top:5.4px" width="11" height="8"><path d="M1.2 1.2L5.5 5.4L9.8 1.2" stroke="#24242c" stroke-width="2.1" fill="none"/></svg></div>
<div class="t" style="left:850px;top:281.7px;transform:scaleX(0.889);">None</div>
<div class="gb" style="left:768px;top:431px;width:228px;height:49px"></div>
<div class="a" style="left:775px;top:430px;width:80.5px;height:3px;background:#e1e0e5"></div>
<div class="t" style="left:776.3px;top:424px;transform:scaleX(0.984);color:#1746b4;">fft1</div>
<div class="t" style="left:799.5px;top:424px;transform:scaleX(0.912);color:#1746b4;">Freq</div>
<div class="t" style="left:826.3px;top:424px;transform:scaleX(1.380);color:#1746b4;">/</div>
<div class="t" style="left:836px;top:424px;transform:scaleX(0.987);color:#1746b4;">Div</div>
<div class="t" style="left:780.5px;top:449.5px;transform:scaleX(0.941);">scale:</div>
<div class="combo" style="left:846px;top:447px;width:137px"><div class="cbtn"></div><svg class="a" style="right:3px;top:5.4px" width="11" height="8"><path d="M1.2 1.2L5.5 5.4L9.8 1.2" stroke="#24242c" stroke-width="2.1" fill="none"/></svg></div>
<div class="t" style="left:849.5px;top:449.7px;">1kHz/DIV</div>
<div class="gb" style="left:768px;top:487px;width:228px;height:48px"></div>
<div class="a" style="left:775px;top:486px;width:71px;height:3px;background:#e1e0e5"></div>
<div class="t" style="left:776.3px;top:479.5px;transform:scaleX(0.984);color:#1746b4;">fft1</div>
<div class="t" style="left:798.7px;top:479.5px;transform:scaleX(0.974);color:#1746b4;">dB</div>
<div class="t" style="left:817.5px;top:479.5px;transform:scaleX(1.380);color:#1746b4;">/</div>
<div class="t" style="left:827.3px;top:479.5px;transform:scaleX(0.969);color:#1746b4;">Div</div>
<div class="t" style="left:780.5px;top:504.5px;transform:scaleX(0.941);">scale:</div>
<div class="combo" style="left:846px;top:502px;width:137px"><div class="cbtn"></div><svg class="a" style="right:3px;top:5.4px" width="11" height="8"><path d="M1.2 1.2L5.5 5.4L9.8 1.2" stroke="#24242c" stroke-width="2.1" fill="none"/></svg></div>
<div class="t" style="left:849.5px;top:504.7px;transform:scaleX(0.918);">10db</div>
<!-- LIST -->
<div class="a" style="left:6px;top:538px;width:657px;height:113px;background:#fff;border:1px solid #a9b6cc"></div>
<div class="a" style="left:28px;top:540px;width:633px;height:14px;background:#e0e0e4"></div>
<div class="a" style="left:8px;top:553px;width:20px;height:1px;background:#dcdcdc"></div>
<div class="a" style="left:8px;top:567px;width:654px;height:1px;background:#dcdcdc"></div>
<div class="a" style="left:8px;top:581px;width:654px;height:1px;background:#dcdcdc"></div>
<div class="a" style="left:8px;top:595px;width:654px;height:1px;background:#dcdcdc"></div>
<div class="a" style="left:8px;top:609px;width:654px;height:1px;background:#dcdcdc"></div>
<div class="a" style="left:8px;top:623px;width:654px;height:1px;background:#dcdcdc"></div>
<div class="a" style="left:8px;top:637px;width:654px;height:1px;background:#dcdcdc"></div>
<div class="a" style="left:172px;top:553px;width:1px;height:97px;background:#dcdcdc"></div>
<div class="a" style="left:335px;top:553px;width:1px;height:97px;background:#dcdcdc"></div>
<div class="a" style="left:498px;top:553px;width:1px;height:97px;background:#dcdcdc"></div>
<div class="a" style="left:12px;top:541px;width:12px;height:12px;border:1px solid #3c5274;background:linear-gradient(135deg,#dcdcdc,#fff 70%)"></div>
<svg class="a" style="left:12px;top:541px" width="12" height="12"><path d="M3 5.5L5 7.5L9 3.5" stroke="#2ea32e" stroke-width="1.8" fill="none"/></svg>
<div class="t" style="left:29.7px;top:540px;transform:scaleX(0.990);">fft1</div>
<div class="t" style="left:278px;top:540px;transform:scaleX(1.006);">1kHz/DIV</div>
<div class="t" style="left:467px;top:540px;transform:scaleX(0.936);">10db</div>
<div class="t" style="left:503.5px;top:540px;transform:scaleX(1.109);">/10</div>
<div class="btn" style="left:7px;top:653px;width:24px;border-color:#2a4a80;"></div>
<div class="t" style="left:11.5px;top:655.5px;transform:scaleX(1.022);">dB</div>
<div class="btn" style="left:36px;top:653px;width:93px;border-color:#2a4a80;box-shadow:inset 0 0 0 1px #a8bce0;"></div>
<div class="t" style="left:41px;top:655.5px;transform:scaleX(0.906);">Hanning</div>
<div class="t" style="left:86px;top:655.5px;transform:scaleX(0.890);">Window</div>
<div class="btn" style="left:135px;top:653px;width:50px;border-color:#c9c9c4;background:#f2f2ee;"></div>
<div class="t" style="left:139.5px;top:655.5px;transform:scaleX(0.906);color:#a8a8a0;">Remove</div>
<div class="a" style="left:4px;top:674px;width:661px;height:1px;background:#b8b8c0"></div>
<div class="a" style="left:4px;top:675px;width:661px;height:1px;background:#fbfbfd"></div>
<!-- INFO -->
<div class="gb" style="left:666px;top:544px;width:330px;height:132px"></div>
<div class="a" style="left:673px;top:543px;width:102px;height:3px;background:#e1e0e5"></div>
<div class="t" style="left:675px;top:537px;color:#1746b4;">fft1</div>
<div class="t" style="left:697.2px;top:537px;transform:scaleX(0.898);color:#1746b4;">WaveForm</div>
<div class="t" style="left:753.7px;top:537px;transform:scaleX(0.939);color:#1746b4;">Info</div>
<div class="a" style="left:679px;top:555px;width:304px;height:113px;background:#fff;border:1px solid #a9b6cc"></div>
<div class="a" style="left:680px;top:556px;width:240px;height:22px;background:linear-gradient(to bottom,#fdfdfe 0,#fafafb 17px,#e4e4ea 19px,#d0d0d8 20px,#c0c0ca 22px)"></div>
<div class="a" style="left:920px;top:556px;width:62px;height:22px;background:linear-gradient(to bottom,#dcdcde 0,#dadadc 17px,#cfcfd4 19px,#c4c4cc 20px,#b8b8c2 22px)"></div>
<div class="a" style="left:759px;top:559px;width:1px;height:16px;background:#c4c4cc"></div>
<div class="a" style="left:760px;top:559px;width:1px;height:16px;background:#fff"></div>
<div class="a" style="left:919px;top:559px;width:1px;height:16px;background:#c4c4cc"></div>
<div class="a" style="left:920px;top:559px;width:1px;height:16px;background:#fff"></div>
<div class="t" style="left:690px;top:560.5px;transform:scaleX(0.942);">Type</div>
<div class="t" style="left:770.5px;top:560.5px;transform:scaleX(0.940);">Value</div>
<div class="a" style="left:680px;top:591px;width:302px;height:1px;background:#dcdcdc"></div>
<div class="a" style="left:680px;top:604px;width:302px;height:1px;background:#dcdcdc"></div>
<div class="a" style="left:680px;top:617px;width:302px;height:1px;background:#dcdcdc"></div>
<div class="a" style="left:680px;top:630px;width:302px;height:1px;background:#dcdcdc"></div>
<div class="a" style="left:680px;top:643px;width:302px;height:1px;background:#dcdcdc"></div>
<div class="a" style="left:680px;top:656px;width:302px;height:1px;background:#dcdcdc"></div>
<div class="a" style="left:761px;top:578px;width:1px;height:89px;background:#dcdcdc"></div>
<div class="a" style="left:921px;top:578px;width:1px;height:89px;background:#dcdcdc"></div>
<div class="t" style="left:687px;top:577.5px;transform:scaleX(0.916);">Frequency:</div>
<div class="t" style="left:687px;top:590.5px;transform:scaleX(0.894);">Period:</div>
<div class="t" style="left:687px;top:603.5px;transform:scaleX(0.915);">PK-PK:</div>
<div class="t" style="left:687px;top:616.5px;transform:scaleX(0.897);">Zoom</div>
<div class="t" style="left:766.7px;top:577.5px;transform:scaleX(0.944);">?</div>
<div class="t" style="left:766.7px;top:590.5px;transform:scaleX(0.944);">?</div>
<div class="t" style="left:766.5px;top:603.5px;transform:scaleX(0.866);">1.940</div>
<div class="t" style="left:796px;top:603.5px;transform:scaleX(1.124);">V</div>
<div class="t" style="left:768px;top:616.5px;transform:scaleX(1.154);font-family:'Liberation Serif',serif;">X</div>
<div class="t" style="left:778.5px;top:616.5px;">1</div>
<!-- STATUS -->
<div class="t" style="left:10.2px;top:684px;transform:scaleX(0.894);">C:¥Program</div>
<div class="t" style="left:73.5px;top:684px;transform:scaleX(0.959);">Files</div>
<div class="t" style="left:97.3px;top:684px;transform:scaleX(0.865);">¥OWON</div>
<div class="t" style="left:136.2px;top:684px;transform:scaleX(0.954);">¥Oscilloscope</div>
<div class="t" style="left:207px;top:684px;transform:scaleX(0.957);">¥Oscilloscope</div>
<div class="t" style="left:278.7px;top:684px;transform:scaleX(0.898);">¥1315686530.bin</div>
<div class="t" style="left:816.5px;top:683.5px;transform:scaleX(0.964);color:#18861c;">automatically</div>
<div class="t" style="left:888.9px;top:683.5px;transform:scaleX(0.912);color:#18861c;">check</div>
<div class="t" style="left:923.3px;top:683.5px;transform:scaleX(0.857);color:#18861c;">USB:</div>
<svg class="a" style="left:952px;top:685px" width="18" height="12" viewBox="0 0 18 12"><g stroke="#3c3c44" fill="none" stroke-width="1.2"><path d="M2 6H15"/><path d="M5 6L8 2.5H10.5"/><path d="M7.5 6L10 9.5H12"/></g><circle cx="2.3" cy="6" r="1.5" fill="#3c3c44"/><path d="M13.5 3.8L17 6L13.5 8.2Z" fill="#3c3c44"/><rect x="10" y="1.4" width="2.4" height="2.4" fill="#3c3c44"/><circle cx="12.6" cy="9.5" r="1.4" fill="#3c3c44"/></svg>
<div class="a" style="left:975px;top:683px;width:16px;height:17px;border:1px solid #b0b0ba;border-radius:2px;background:linear-gradient(to bottom,#ffffff,#ececf2 50%,#c8cad8)"></div>
<svg class="a" style="left:978px;top:688px" width="10" height="8"><path d="M1 1.5L5 5.5L9 1.5" stroke="#24242c" stroke-width="2" fill="none"/></svg>
</div>
</body></html>
